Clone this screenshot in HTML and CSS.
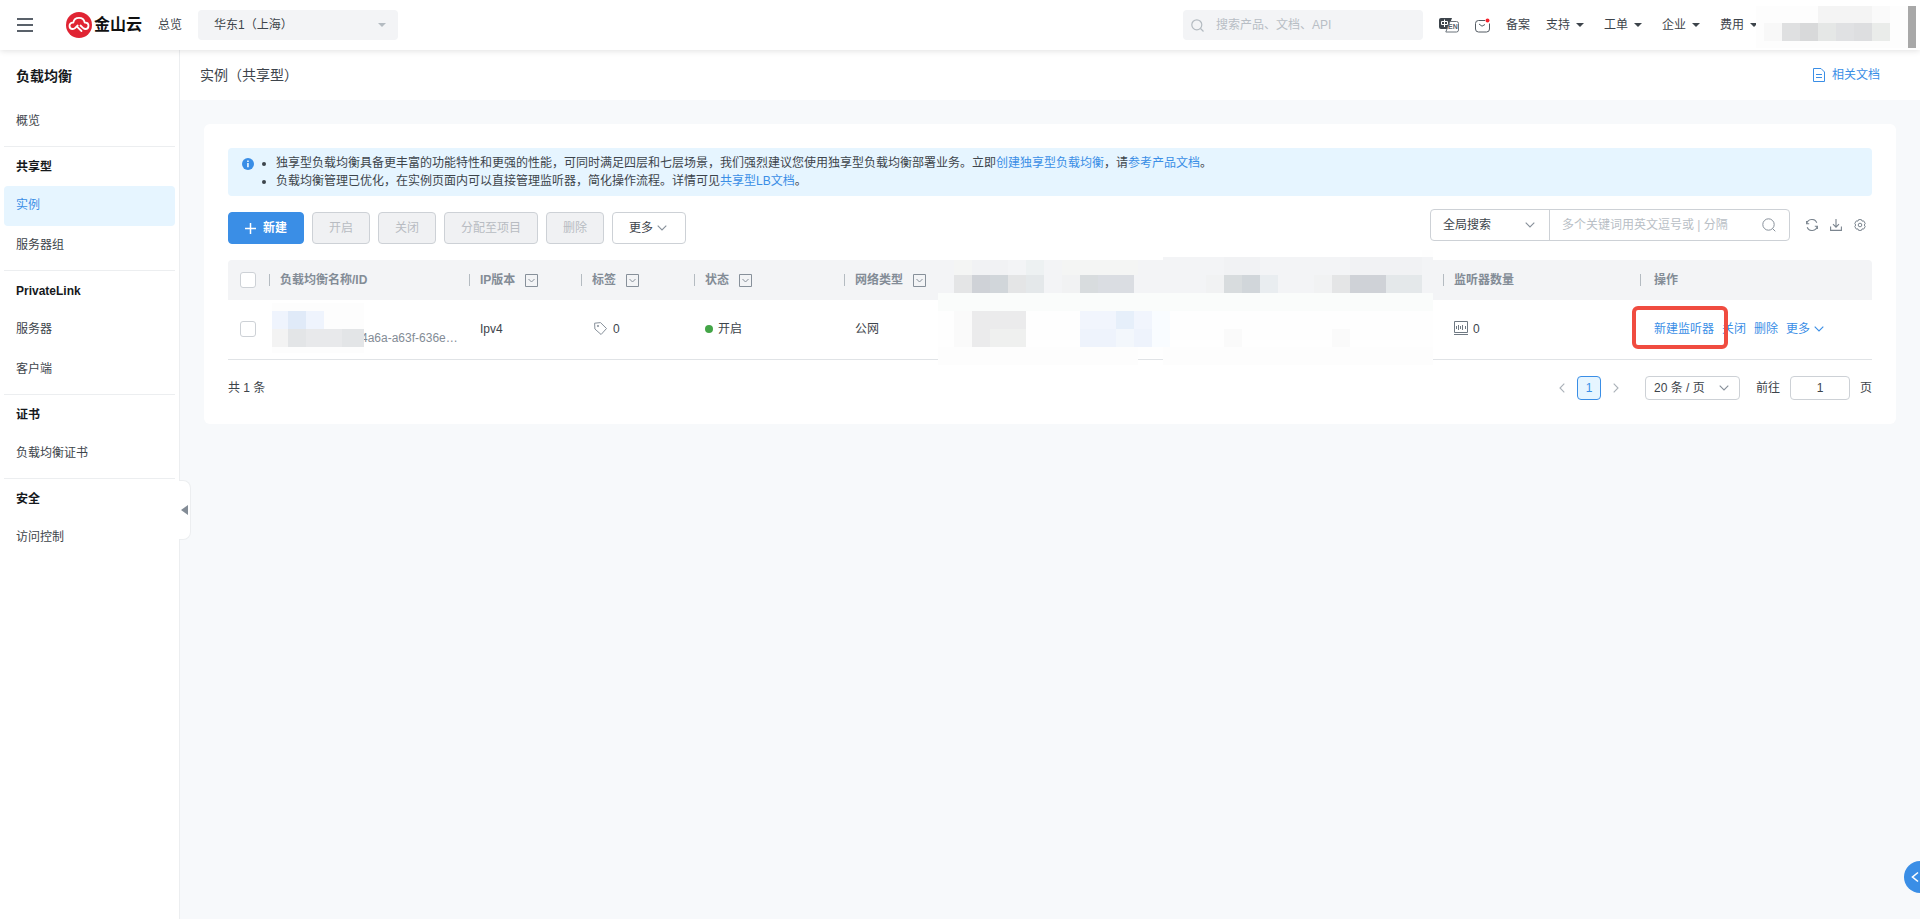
FILE: index.html
```
<!DOCTYPE html>
<html lang="zh-CN">
<head>
  <meta charset="UTF-8">
  <title>负载均衡 - 实例（共享型）</title>
  <link rel="stylesheet" href="styles.css">
</head>
<body>
<header class="topbar">
  <button class="menu-btn" aria-label="菜单"><i></i><i></i><i></i></button>
  <a class="logo" href="#">
    <svg width="26" height="26" viewBox="0 0 26 26">
      <circle cx="13" cy="13" r="13" fill="#e02433"/>
      <path d="M14.500 13.500l3 2.800c.6.500 1.100.7 1.700.7a3.200 3.200 0 0 0 .2-6.400h-.7a5.800 5.800 0 0 0-11.400 0h-.7A3.200 3.200 0 0 0 6.800 17c.9 0 1.500-.2 2.200-.9l2.700-2.600M11.200 14.800l4.300 4.200" fill="none" stroke="#fff" stroke-width="1.800" stroke-linecap="round" stroke-linejoin="round"/>
    </svg>
    <span>金山云</span>
  </a>
  <a class="overview" href="#">总览</a>
  <div class="region">
    <select aria-label="地域"><option>华东1（上海）</option></select>
    <span class="caret"></span>
  </div>
  <label class="top-search">
    <svg width="13" height="13" viewBox="0 0 13 13" fill="none" stroke="#b4bbc1" stroke-width="1.2"><circle cx="5.8" cy="5.8" r="5"/><path d="M9.5 9.5l3 3"/></svg>
    <input type="text" placeholder="搜索产品、文档、API">
  </label>
  <button class="icon-btn" aria-label="语言">
    <svg width="20" height="16" viewBox="0 0 20 16">
      <path d="M2 1h11l-4 11H2a2 2 0 0 1-2-2V3a2 2 0 0 1 2-2z" fill="#3d444b"/>
      <path d="M2.500 4.500h6v3h-6zM5.500 2.500v7.500" fill="none" stroke="#fff"/>
      <path d="M11 4.500h6.500a2 2 0 0 1 2 2V13a2 2 0 0 1-2 2H6.800z" fill="#fff" stroke="#6b737b"/>
      <text x="9" y="12" class="en">EN</text>
    </svg>
  </button>
  <button class="icon-btn" aria-label="消息">
    <svg width="15" height="15" viewBox="0 0 15 15" fill="none" stroke="#535b63">
      <path d="M10 2.500H3.500a3 3 0 0 0-3 3V11a3 3 0 0 0 3 3h8a3 3 0 0 0 3-3V5.500"/>
      <path d="M4 6l3 2.200L10 6.500"/>
      <circle cx="12.500" cy="2.500" r="2" fill="#f5222d" stroke="none"/>
    </svg>
  </button>
  <a class="nav-link" href="#">备案</a>
  <nav class="top-nav">
    <a href="#">支持<span class="caret dark"></span></a>
    <a href="#">工单<span class="caret dark"></span></a>
    <a href="#">企业<span class="caret dark"></span></a>
    <a href="#">费用<span class="caret dark"></span></a>
  </nav>
  <svg class="account" width="152" height="42" viewBox="0 0 152 42" shape-rendering="crispEdges">
    <path d="M0 0h152v42H0z" fill="#fdfdfd"/>
    <path d="M62 0h54v17H62z" fill="#f4f4f4"/>
    <path d="M116 0h18v17h-18z" fill="#fafafa"/>
    <path d="M8 17h18v18H8z" fill="#f8f8f8"/>
    <path d="M26 17h18v18H26z" fill="#dfe0e1"/>
    <path d="M44 17h18v18H44z" fill="#d8d9da"/>
    <path d="M62 17h18v18H62z" fill="#e5e7e6"/>
    <path d="M80 17h18v18H80z" fill="#e0e1e3"/>
    <path d="M98 17h18v18H98z" fill="#dddee0"/>
    <path d="M116 17h18v18h-18z" fill="#eaecea"/>
  </svg>
  <span class="scroll-thumb"></span>
</header>

<div class="layout">
  <aside class="sidebar">
    <h2>负载均衡</h2>
    <nav>
      <section><a href="#">概览</a></section>
      <section>
        <h3>共享型</h3>
        <a class="active" href="#">实例</a>
        <a href="#">服务器组</a>
      </section>
      <section>
        <h3>PrivateLink</h3>
        <a href="#">服务器</a>
        <a href="#">客户端</a>
      </section>
      <section>
        <h3>证书</h3>
        <a href="#">负载均衡证书</a>
      </section>
      <section>
        <h3>安全</h3>
        <a href="#">访问控制</a>
      </section>
    </nav>
    <button class="collapse" aria-label="收起"></button>
  </aside>

  <main>
    <div class="page-head">
      <h1>实例（共享型）</h1>
      <a href="#">
        <svg width="12" height="14" viewBox="0 0 12 14" fill="none" stroke="#3a8ee6"><path d="M.5.500h7.500l3.500 3.500v9.500H.5zM3 6.500h6M3 9.500h6"/></svg>
        相关文档
      </a>
    </div>

    <div class="card">
      <div class="alert">
        <svg width="12" height="12" viewBox="0 0 12 12"><circle cx="6" cy="6" r="6" fill="#3a8ee6"/><path d="M5.200 2.500h1.500v1.400H5.200zM5.200 5h1.500v4.200H5.200z" fill="#fff"/></svg>
        <ul>
          <li>独享型负载均衡具备更丰富的功能特性和更强的性能，可同时满足四层和七层场景，我们强烈建议您使用独享型负载均衡部署业务。立即<a href="#">创建独享型负载均衡</a>，请<a href="#">参考产品文档</a>。</li>
          <li>负载均衡管理已优化，在实例页面内可以直接管理监听器，简化操作流程。详情可见<a href="#">共享型LB文档</a>。</li>
        </ul>
      </div>

      <div class="toolbar">
        <div class="actions">
          <button class="btn primary"><svg width="11" height="11" viewBox="0 0 11 11" stroke="#fff" stroke-width="1.500"><path d="M5.500 0v11M0 5.500h11"/></svg>新建</button>
          <button class="btn" disabled>开启</button>
          <button class="btn" disabled>关闭</button>
          <button class="btn" disabled>分配至项目</button>
          <button class="btn" disabled>删除</button>
          <button class="btn more">更多<svg class="chevron" width="10" height="6" viewBox="0 0 10 6"><path d="M.7.700L5 5 9.300.700"/></svg></button>
        </div>
        <div class="tools">
          <div class="search-group">
            <div class="select-box scope">
              <select aria-label="搜索范围"><option>全局搜索</option></select>
              <svg class="chevron" width="10" height="6" viewBox="0 0 10 6"><path d="M.7.700L5 5 9.300.700"/></svg>
            </div>
            <label class="keyword">
              <input type="text" placeholder="多个关键词用英文逗号或 | 分隔">
              <svg width="14" height="14" viewBox="0 0 14 14" fill="none" stroke="#87909a"><circle cx="6.500" cy="6.500" r="5.700"/><path d="M10.600 10.600l2.700 2.700"/></svg>
            </label>
          </div>
          <button class="icon-btn" aria-label="刷新">
            <svg width="12" height="12" viewBox="0 0 12 12" fill="none" stroke="#7b858f" stroke-width="1.100"><path d="M.7 4.800A5.300 5.300 0 0 1 10.800 3.800M11.300 7.200A5.300 5.300 0 0 1 1.200 8.200M.6 2v2.800h2.600M11.400 10v-2.800H8.800"/></svg>
          </button>
          <button class="icon-btn" aria-label="下载">
            <svg width="12" height="12" viewBox="0 0 12 12" fill="none" stroke="#7b858f" stroke-width="1.100"><path d="M6 0v8M3 5.200l3 3 3-3M.6 7.500v3.900h10.800V7.500"/></svg>
          </button>
          <button class="icon-btn" aria-label="设置">
            <svg width="12" height="12" viewBox="0 0 12 12" fill="none" stroke="#7b858f" stroke-linejoin="round"><path d="M4.600.600h2.800l.6 1.500 1.700-.2 1.500 2.500L10.300 6l.9 1.600-1.500 2.500-1.700-.2-.6 1.500H4.600L4 9.900l-1.700.2L.8 7.600 1.700 6 .8 4.400l1.500-2.500 1.700.2z"/><circle cx="6" cy="6" r="1.800"/></svg>
          </button>
        </div>
      </div>

      <table>
        <colgroup>
          <col class="c-check"><col class="c-name"><col class="c-ip"><col class="c-tag"><col class="c-net"><col><col class="c-count"><col class="c-ops">
        </colgroup>
        <thead>
          <tr>
            <th class="check"><input type="checkbox" aria-label="全选"></th>
            <th class="sep">负载均衡名称/ID</th>
            <th class="sep">IP版本<svg class="filter" width="13" height="13" viewBox="0 0 13 13"><path d="M.5.500h12v12H.5zM3.500 5l3 3 3-3"/></svg></th>
            <th class="sep">标签<svg class="filter" width="13" height="13" viewBox="0 0 13 13"><path d="M.5.500h12v12H.5zM3.500 5l3 3 3-3"/></svg></th>
            <th class="sep">状态<svg class="filter" width="13" height="13" viewBox="0 0 13 13"><path d="M.5.500h12v12H.5zM3.500 5l3 3 3-3"/></svg></th>
            <th class="masked">
              <div class="net sep">网络类型<svg class="filter" width="13" height="13" viewBox="0 0 13 13"><path d="M.5.500h12v12H.5zM3.500 5l3 3 3-3"/></svg></div>
              <svg class="mosaic wide" width="495" height="115" viewBox="0 0 495 115" shape-rendering="crispEdges">
                <path d="M0 10h225V7h270v36H0z" fill="#f3f4f6"/>
                <path d="M484 0h11v7h-11zM0 61h495v36H0z" fill="#fefefe"/>
                <path d="M0 43h495v18H0z" fill="#fafcfb"/>
                <path d="M0 97h200v18H0zM225 97h270v18H225z" fill="#fdfdfd"/>
                <path d="M200 97h25v11h-25z" fill="#fefefe"/>
                <path d="M16 10h18v15H16zM124 10h76v15h-76z" fill="#f4f5f4"/>
                <path d="M34 10h36v15H34zM286 7h36v18h-36zM412 7h72v18h-72z" fill="#f1f2f4"/>
                <path d="M88 10h18v15H88z" fill="#edf1f2"/>
                <path d="M16 25h18v18H16zM70 25h18v18H70zM394 25h18v18h-18z" fill="#e4e5e6"/>
                <path d="M34 25h18v18H34zM412 25h36v18h-36z" fill="#cfd2d7"/>
                <path d="M52 25h18v18H52zM304 25h18v18h-18z" fill="#d1d6da"/>
                <path d="M88 25h18v18H88zM448 25h36v18h-36z" fill="#e4e8ea"/>
                <path d="M142 25h18v18h-18zM286 25h18v18h-18z" fill="#d8dcde"/>
                <path d="M160 25h36v18h-36z" fill="#dadde2"/>
                <path d="M322 25h18v18h-18z" fill="#e9edf0"/>
                <path d="M124 25h18v18h-18zM268 25h18v18h-18zM376 25h18v18h-18z" fill="#f1f2f3"/>
                <path d="M16 61h18v36H16zM286 79h18v18h-18zM394 79h18v18h-18z" fill="#fafafa"/>
                <path d="M34 61h54v18H34zM34 79h18v18H34z" fill="#ebebec"/>
                <path d="M52 79h36v18H52z" fill="#eff0ef"/>
                <path d="M142 61h72v18h-72z" fill="#f1f5fd"/>
                <path d="M178 61h18v18h-18z" fill="#e6effa"/>
                <path d="M142 79h72v18h-72z" fill="#eef3fc"/>
                <path d="M178 79h18v18h-18z" fill="#f3f7fc"/>
                <path d="M214 61h18v36h-18z" fill="#f9fcff"/>
              </svg>
            </th>
            <th class="sep">监听器数量</th>
            <th class="sep ops">操作</th>
          </tr>
        </thead>
        <tbody>
          <tr>
            <td class="check"><input type="checkbox" aria-label="选择实例"></td>
            <td>
              <svg class="mosaic id-mask" width="92" height="50" viewBox="0 0 92 50" shape-rendering="crispEdges">
                <path d="M0 0h92v50H0z" fill="#fdfdfd"/>
                <path d="M0 8h52v18H0z" fill="#eff4fd"/>
                <path d="M16 8h18v18H16z" fill="#e0eaf8"/>
                <path d="M0 26h16v18H0z" fill="#f3f3f3"/>
                <path d="M16 26h18v18H16zM70 26h22v18H70z" fill="#e3e5e7"/>
                <path d="M34 26h36v18H34z" fill="#e8e9eb"/>
              </svg>
              <span class="id">4a6a-a63f-636e…</span>
            </td>
            <td>Ipv4</td>
            <td>
              <div class="cell tag">
                <svg width="13" height="13" viewBox="0 0 13 13" fill="none" stroke="#87909a"><path d="M.6 1.200L6.500.600l6 5.900-5.400 6L.9 7z" stroke-linejoin="round"/><circle cx="4" cy="4" r=".7"/></svg>
                <span>0</span>
              </div>
            </td>
            <td><div class="cell"><i class="dot"></i>开启</div></td>
            <td>公网</td>
            <td>
              <div class="cell">
                <svg width="15" height="15" viewBox="0 0 15 15" fill="none" stroke="#6f7983"><path d="M.5.500h13v11H.5zM0 13.500h14M2.500 5v3M4.500 4v5M6.500 5v3M8.500 4v5M11.500 5v3"/></svg>
                <span>0</span>
              </div>
            </td>
            <td class="ops">
              <div class="cell links">
                <a href="#">新建监听器</a>
                <a href="#">关闭</a>
                <a href="#">删除</a>
                <a href="#">更多<svg class="chevron" width="10" height="6" viewBox="0 0 10 6"><path d="M.7.700L5 5 9.300.700"/></svg></a>
              </div>
              <span class="highlight"></span>
            </td>
          </tr>
        </tbody>
      </table>

      <div class="pager">
        <span class="total">共 1 条</span>
        <button class="arrow" aria-label="上一页"><svg width="6" height="10" viewBox="0 0 6 10"><path d="M5.300.700L1 5l4.300 4.300"/></svg></button>
        <button class="page">1</button>
        <button class="arrow" aria-label="下一页"><svg width="6" height="10" viewBox="0 0 6 10"><path d="M.7.700L5 5 .7 9.300"/></svg></button>
        <div class="select-box size">
          <select aria-label="每页条数"><option>20 条 / 页</option></select>
          <svg class="chevron" width="10" height="6" viewBox="0 0 10 6"><path d="M.7.700L5 5 9.300.700"/></svg>
        </div>
        <label class="jump">前往<input type="text" value="1">页</label>
      </div>
    </div>
  </main>
</div>

<button class="float-btn" aria-label="展开"><svg width="8" height="12" viewBox="0 0 8 12"><path d="M7 1.500L1.500 6 7 10.500"/></svg></button>
</body>
</html>
```

FILE: styles.css
```
* {
  box-sizing: border-box;
}

body {
  margin: 0;
  min-height: 100vh;
  display: flex;
  flex-direction: column;
  overflow-x: hidden;
  font-family: "Liberation Sans", "Noto Sans CJK SC", sans-serif;
  font-size: 12px;
  line-height: 18px;
  color: #3d444b;
  background: #f7f9fb;
}

a {
  color: #3a8ee6;
  text-decoration: none;
}

h1, h2, h3, ul {
  margin: 0;
  padding: 0;
}

svg {
  display: block;
  flex: none;
}

button, input, select {
  font: inherit;
  color: inherit;
  margin: 0;
}

button {
  padding: 0;
  border: none;
  background: none;
  cursor: pointer;
}

input, select {
  appearance: none;
  border: none;
  outline: none;
  padding: 0;
  background: transparent;
}

/* top bar */
.topbar {
  position: relative;
  z-index: 2;
  display: flex;
  align-items: center;
  gap: 16px;
  height: 50px;
  padding: 0 12px 0 17px;
  background: #fff;
  box-shadow: 0 1px 6px rgba(0, 0, 0, 0.12);
}

.menu-btn {
  display: grid;
  gap: 4px;
  width: 16px;
  margin-right: 17px;
}

.menu-btn i {
  height: 2px;
  background: #59616a;
}

.logo {
  display: flex;
  align-items: center;
  gap: 2px;
  color: #111;
  font-size: 16px;
  font-weight: bold;
}

.overview, .nav-link, .top-nav a {
  color: #3d444b;
}

.region {
  position: relative;
  width: 200px;
  margin-right: auto;
}

.region select {
  width: 100%;
  height: 30px;
  padding: 0 16px;
  border-radius: 4px;
  background: #f3f4f6;
}

.region .caret {
  position: absolute;
  top: 13px;
  right: 12px;
}

.caret {
  border: 4px solid transparent;
  border-top-color: #b4bbc1;
  border-bottom: none;
}

.caret.dark {
  border-top-color: #3d444b;
}

.top-search {
  display: flex;
  align-items: center;
  gap: 12px;
  width: 240px;
  height: 30px;
  padding: 0 8px;
  border-radius: 4px;
  background: #f3f4f6;
}

.top-search input, .keyword input {
  flex: 1;
  min-width: 0;
}

::placeholder {
  color: #b8bec5;
}

.en {
  font-size: 7px;
  font-weight: bold;
  fill: #59616a;
}

.top-nav {
  display: flex;
  gap: 20px;
}

.top-nav a {
  display: flex;
  align-items: center;
  gap: 6px;
}

.account {
  margin: 4px 0 0 -18px;
  position: relative;
}

.scroll-thumb {
  position: absolute;
  top: 6px;
  right: 4px;
  width: 8px;
  height: 42px;
  background: #a8a8a8;
}

/* sidebar */
.layout {
  flex: 1;
  display: flex;
}

.sidebar {
  position: relative;
  flex: none;
  width: 180px;
  padding: 0 4px;
  background: #fff;
  border-right: 1px solid #eceef0;
}

.sidebar h2 {
  padding-left: 12px;
  font-size: 14px;
  line-height: 52px;
  color: #16191c;
}

.sidebar section {
  padding-bottom: 4px;
}

.sidebar section + section {
  border-top: 1px solid #eceef0;
}

.sidebar h3 {
  padding: 1px 0 0 12px;
  font-size: 12px;
  line-height: 38px;
  color: #16191c;
}

.sidebar a {
  display: block;
  padding: 0 0 2px 12px;
  line-height: 38px;
  border-radius: 4px;
  color: #3d444b;
}

.sidebar a.active {
  background: #e6f5ff;
  color: #3a8ee6;
}

.collapse {
  position: absolute;
  top: 430px;
  right: -12px;
  width: 12px;
  height: 60px;
  border: 1px solid #eceef0;
  border-left: none;
  border-radius: 0 8px 8px 0;
  background: #fff;
}

.collapse::before {
  content: "";
  position: absolute;
  top: 24px;
  left: 2px;
  border: 5px solid transparent;
  border-right: 7px solid #838c96;
  border-left: none;
}

/* content */
main {
  flex: 1;
  min-width: 0;
}

.page-head {
  display: flex;
  align-items: center;
  justify-content: space-between;
  height: 50px;
  padding: 0 40px 0 20px;
  background: #fff;
}

.page-head h1 {
  font-size: 14px;
  font-weight: normal;
}

.page-head a {
  display: flex;
  align-items: center;
  gap: 7px;
}

.card {
  margin: 24px;
  padding: 24px;
  border-radius: 6px;
  background: #fff;
}

.alert {
  display: flex;
  gap: 22px;
  padding: 6px 14px;
  border-radius: 4px;
  background: #e6f5ff;
}

.alert svg {
  margin-top: 4px;
}

.toolbar {
  display: flex;
  justify-content: space-between;
  height: 35px;
  margin: 13px 0 16px;
}

.actions {
  display: flex;
  align-items: flex-end;
  gap: 8px;
}

.btn {
  display: flex;
  align-items: center;
  height: 32px;
  padding: 0 16px;
  border: 1px solid #cdd1d6;
  border-radius: 4px;
  background: #fff;
}

.btn:disabled {
  background: #f0f1f3;
  color: #b8bcc2;
  cursor: default;
}

.btn.primary {
  gap: 7px;
  border-color: #3a8ee6;
  background: #3a8ee6;
  color: #fff;
  font-weight: bold;
}

.btn.more {
  gap: 4px;
  padding-right: 18px;
}

.chevron, .arrow svg {
  fill: none;
  stroke: #87909a;
  stroke-width: 1.1;
}

.tools {
  display: flex;
  align-items: center;
  gap: 12px;
  height: 32px;
  padding-right: 6px;
}

.search-group {
  display: flex;
  width: 360px;
  height: 32px;
  margin-right: 4px;
  border: 1px solid #cdd1d6;
  border-radius: 4px;
}

.select-box {
  position: relative;
}

.select-box select {
  width: 100%;
  height: 100%;
  padding-left: 12px;
}

.select-box .chevron {
  position: absolute;
  top: 50%;
  right: 14px;
  margin-top: -3px;
  pointer-events: none;
}

.scope {
  width: 119px;
  border-right: 1px solid #cdd1d6;
}

.keyword {
  flex: 1;
  display: flex;
  align-items: center;
  padding: 0 13px 0 12px;
}

/* table */
table {
  width: 100%;
  table-layout: fixed;
  border-spacing: 0;
}

.c-check { width: 41px; }
.c-name { width: 200px; }
.c-ip { width: 112px; }
.c-tag { width: 113px; }
.c-net { width: 150px; }
.c-count { width: 197px; }
.c-ops { width: 232px; }

th, td {
  position: relative;
  padding: 0 0 0 11px;
  text-align: left;
}

th {
  height: 40px;
  background: #f3f4f6;
  color: #838c96;
}

th:first-child {
  border-top-left-radius: 4px;
}

th:last-child {
  border-top-right-radius: 4px;
}

td {
  height: 60px;
  padding-bottom: 2px;
  border-bottom: 1px solid #e0e3e6;
}

.sep::before {
  content: "";
  position: absolute;
  top: 14px;
  left: 0;
  width: 1px;
  height: 12px;
  background: #b4bbc1;
}

.check {
  padding-left: 12px;
}

input[type="checkbox"] {
  display: block;
  width: 16px;
  height: 16px;
  border: 1px solid #cdd1d6;
  border-radius: 3px;
  background: #fff;
}

.filter {
  display: inline-block;
  margin-left: 10px;
  vertical-align: -3px;
  fill: none;
  stroke: #87909a;
}

.masked {
  padding-left: 0;
}

.net {
  padding-left: 11px;
}

/* pixelated areas over the hidden columns */
.mosaic {
  position: absolute;
  z-index: 1;
}

.mosaic.wide {
  top: -10px;
  left: 94px;
}

.id-mask {
  top: 3px;
  left: 3px;
}

.id {
  display: block;
  padding: 18px 0 0 81px;
  color: #838c96;
}

.cell {
  display: flex;
  align-items: center;
  gap: 4px;
}

.cell.tag {
  gap: 6px;
  padding-left: 2px;
}

.dot {
  width: 8px;
  height: 8px;
  margin-right: 1px;
  border-radius: 50%;
  background: #43a547;
}

.ops {
  padding-left: 14px;
}

.links {
  gap: 8px;
}

.links a {
  display: flex;
  align-items: center;
  gap: 4px;
}

.links .chevron {
  stroke: #3a8ee6;
}

.highlight {
  position: absolute;
  top: 6px;
  left: -8px;
  width: 96px;
  height: 43px;
  border: 4px solid #f04c40;
  border-radius: 6px;
  pointer-events: none;
}

/* pagination */
.pager {
  display: flex;
  align-items: center;
  margin-top: 16px;
}

.total {
  margin-right: auto;
}

.arrow {
  padding: 0 12px;
}

.arrow svg {
  stroke: #aab1b8;
}

.page {
  width: 24px;
  height: 24px;
  border: 1px solid #3a8ee6;
  border-radius: 4px;
  background: #e6f5ff;
  color: #3a8ee6;
}

.size {
  width: 95px;
  height: 24px;
  margin: 0 16px 0 14px;
  border: 1px solid #cdd1d6;
  border-radius: 4px;
}

.size select {
  padding-left: 8px;
}

.size .chevron {
  right: 10px;
}

.jump {
  display: flex;
  align-items: center;
  gap: 10px;
}

.jump input {
  width: 60px;
  height: 24px;
  border: 1px solid #cdd1d6;
  border-radius: 4px;
  text-align: center;
}

.float-btn {
  position: fixed;
  right: -16px;
  bottom: 26px;
  width: 32px;
  height: 32px;
  padding-left: 7px;
  border-radius: 50%;
  background: #3a8ee6;
}

.float-btn svg {
  fill: none;
  stroke: #fff;
  stroke-width: 1.6;
}
```
